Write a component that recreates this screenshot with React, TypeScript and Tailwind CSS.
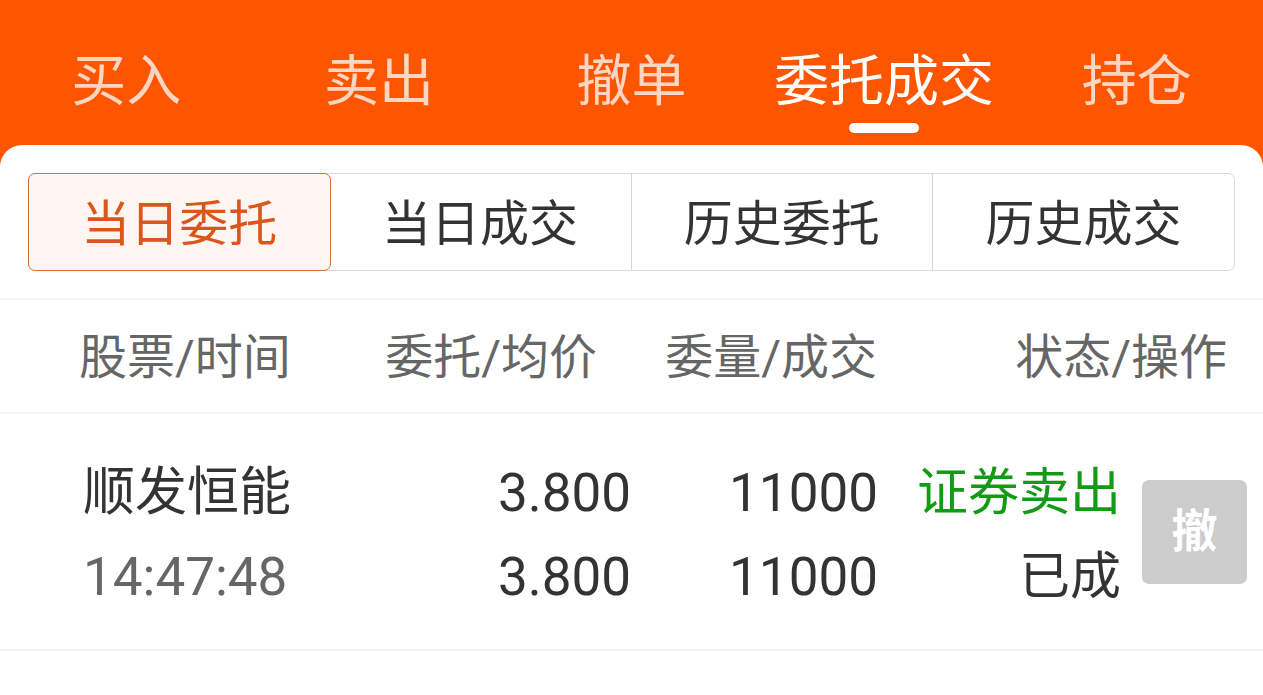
import React from "react";

const FONT = { fontFamily: "Roboto, 'Noto Sans CJK SC', 'Noto Sans', sans-serif" };

export default function App() {
  const tabs = ["买入", "卖出", "撤单", "委托成交", "持仓"];
  const segs = ["当日委托", "当日成交", "历史委托", "历史成交"];
  return (
    <div className="w-[1263px] h-[695px] overflow-hidden bg-[#fe5500] flex flex-col" style={FONT}>
      <div className="h-[145px] flex shrink-0">
        {tabs.map((t, i) => (
          <div key={t} className="flex-1 relative flex justify-center">
            <span
              className={
                "mt-[46px] text-[55px] leading-[70px] " +
                (i === 3 ? "text-white" : "text-[#fcd6c2]")
              }
            >
              {t}
            </span>
            {i === 3 && (
              <div className="absolute top-[123px] left-1/2 -translate-x-1/2 w-[70px] h-[10px] rounded-full bg-white" />
            )}
          </div>
        ))}
      </div>
      <div className="flex-1 bg-white rounded-t-[22px] flex flex-col">
        <div className="px-[28px] pt-[28px]">
          <div className="flex h-[98px] border border-[#dadada] rounded-[7px]">
            {segs.map((s, i) => (
              <div
                key={s}
                className={
                  "flex-1 flex items-center justify-center text-[49px] pt-[5px] " +
                  (i === 0
                    ? "bg-[#fff6f1] border border-[#d27240] rounded-[7px] -m-px text-[#d9561c]"
                    : "text-[#333333] " + (i > 1 ? "border-l border-[#d6d6d6]" : ""))
                }
              >
                {s}
              </div>
            ))}
          </div>
        </div>
        <div className="mt-[27px] border-t-2 border-[#f3f3f3] h-[114px] flex items-center text-[48px] text-[#666666] pl-[79px] pt-[4px]">
          <div className="w-[301px]">股票/时间</div>
          <div className="w-[217px] text-right">委托/均价</div>
          <div className="w-[280px] text-right">委量/成交</div>
          <div className="w-[350px] text-right">状态/操作</div>
        </div>
        <div className="border-t-2 border-[#f3f3f3] h-[239px] flex items-center pl-[83px] border-b-2">
          <div className="w-[317px] flex flex-col text-[52px] leading-[84px] mt-[6px]">
            <span className="text-[#333333]">顺发恒能</span>
            <span className="text-[#666666] text-[53px]">14:47:48</span>
          </div>
          <div className="w-[231px] flex flex-col text-right text-[53px] leading-[84px] text-[#333333] mt-[6px]">
            <span>3.800</span>
            <span>3.800</span>
          </div>
          <div className="w-[247px] flex flex-col text-right text-[53px] leading-[84px] text-[#333333] mt-[6px]">
            <span>11000</span>
            <span>11000</span>
          </div>
          <div className="w-[243px] flex flex-col text-right text-[51px] leading-[84px] mt-[6px]">
            <span className="text-[#149a14]">证券卖出</span>
            <span className="text-[#333333]">已成</span>
          </div>
          <div className="ml-[21px] w-[105px] h-[104px] rounded-[7px] bg-[#cccccc] flex items-center justify-center text-white text-[46px] font-bold">
            撤
          </div>
        </div>
      </div>
    </div>
  );
}
